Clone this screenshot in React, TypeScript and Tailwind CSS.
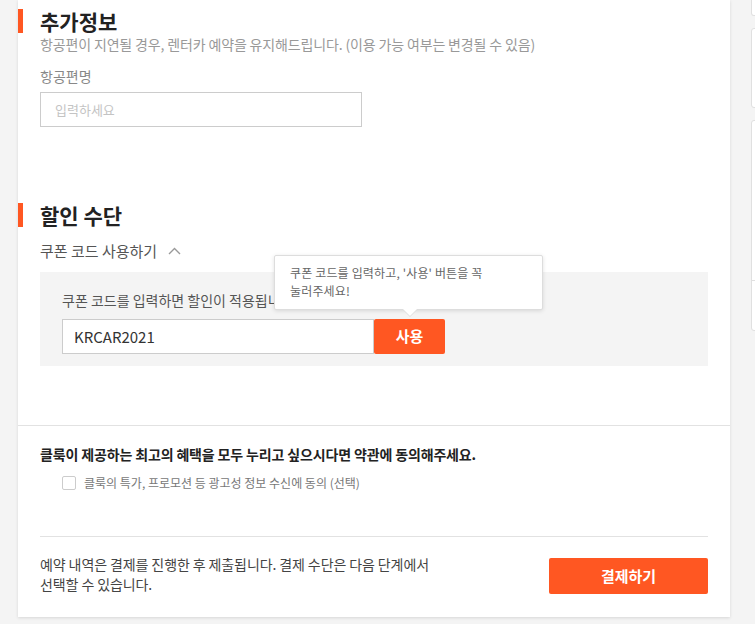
import React from 'react';

const font = {
  fontFamily: '"Noto Sans CJK KR", "Noto Sans", "Liberation Sans", sans-serif',
};

function SectionTitle({ children }: { children: React.ReactNode }) {
  return (
    <h2 className="-ml-[22px] border-l-[5px] border-[#ff5722] pl-[17px] text-[21px] leading-[24px] font-bold text-[#222]">
      {children}
    </h2>
  );
}

export default function App() {
  return (
    <div className="min-h-[624px] w-[755px] overflow-hidden bg-[#f4f4f4]" style={font}>
      <div className="flex items-start gap-[21px] pl-[18px]">
        {/* Main card */}
        <div className="w-[712px] shrink-0 bg-white shadow-[0_1px_3px_rgba(0,0,0,0.12)]">
          <div className="px-[22px] pt-[9px] pb-[59px]">
            {/* 추가정보 */}
            <SectionTitle>추가정보</SectionTitle>
            <p className="mt-[1px] text-[14px] leading-[20px] tracking-[-0.15px] text-[#999]">
              항공편이 지연될 경우, 렌터카 예약을 유지해드립니다. (이용 가능 여부는 변경될 수 있음)
            </p>
            <p className="mt-[12px] text-[14px] leading-[20px] text-[#888]">항공편명</p>
            <input
              className="mt-[6px] h-[35px] w-[322px] border border-[#ccc] px-[14px] text-[13px] text-[#333] outline-none placeholder:text-[#c4c4c4]"
              placeholder="입력하세요"
            />

            {/* 할인 수단 */}
            <div className="mt-[76px]">
              <SectionTitle>할인 수단</SectionTitle>
            </div>
            <div className="mt-[14px] flex items-center gap-[11px] text-[15px] leading-[20px] text-[#555]">
              <span>쿠폰 코드 사용하기</span>
              <svg width="13" height="8" viewBox="0 0 13 8" fill="none">
                <polyline points="1,7 6.5,1.5 12,7" stroke="#999" strokeWidth="1.4" />
              </svg>
            </div>
            <div className="relative mt-[11px] bg-[#f4f4f4] px-[22px] pt-[18px] pb-[12px]">
              <p className="text-[14px] leading-[20px] text-[#555]">쿠폰 코드를 입력하면 할인이 적용됩니다.</p>
              <div className="mt-[9px] flex">
                <input
                  className="h-[35px] w-[312px] border border-[#ccc] bg-white px-[11px] text-[15px] text-[#333] outline-none"
                  defaultValue="KRCAR2021"
                />
                <button className="h-[35px] w-[71px] rounded-[2px] bg-[#ff5722] text-[15px] font-bold text-white">
                  사용
                </button>
              </div>

              {/* Tooltip */}
              <div className="absolute top-[-17px] left-[234px] w-[269px] rounded-[2px] border border-[#ddd] bg-white px-[15px] pt-[8px] pb-[9px] shadow-[0_1px_4px_rgba(0,0,0,0.12)]">
                <p className="text-[12px] leading-[18px] tracking-[0.15px] text-[#666]">
                  쿠폰 코드를 입력하고, '사용' 버튼을 꼭
                  <br />
                  눌러주세요!
                </p>
                <div className="absolute -bottom-[7px] left-[128px] h-0 w-0 border-x-[7px] border-t-[7px] border-x-transparent border-t-white drop-shadow-[0_1px_0_#ddd]" />
              </div>
            </div>
          </div>

          {/* Terms */}
          <div className="border-t border-[#e2e2e2] px-[22px] pt-[18px] pb-[23px]">
            <p className="text-[14px] leading-[20px] font-bold tracking-[-0.15px] text-[#222]">
              클룩이 제공하는 최고의 혜택을 모두 누리고 싶으시다면 약관에 동의해주세요.
            </p>
            <label className="mt-[9px] flex items-center gap-[8px] pl-[22px]">
              <span className="h-[14px] w-[14px] rounded-[2px] border border-[#ccc] bg-white" />
              <span className="text-[12px] leading-[20px] text-[#777]">
                클룩의 특가, 프로모션 등 광고성 정보 수신에 동의 (선택)
              </span>
            </label>

            <div className="mt-[43px] border-t border-[#e2e2e2] pt-[17px]">
              <div className="flex items-start justify-between">
                <p className="text-[14px] leading-[20px] tracking-[-0.1px] text-[#444]">
                  예약 내역은 결제를 진행한 후 제출됩니다. 결제 수단은 다음 단계에서
                  <br />
                  선택할 수 있습니다.
                </p>
                <button className="mt-[4px] h-[36px] w-[159px] rounded-[2px] bg-[#ff5722] text-[15px] font-bold text-white">
                  결제하기
                </button>
              </div>
            </div>
          </div>
        </div>

        {/* Right column */}
        <div className="flex w-[200px] shrink-0 flex-col gap-[12px]">
          <div className="h-[16px] rounded-b-[3px] border border-t-0 border-[#e0e0e0] bg-white" />
          <div className="h-[80px] rounded-[3px] border border-[#e0e0e0] bg-white" />
          <div className="h-[211px] rounded-[3px] border border-[#e0e0e0] bg-white">
            <div className="h-[160px] border-b border-[#e0e0e0]" />
          </div>
        </div>
      </div>
    </div>
  );
}
